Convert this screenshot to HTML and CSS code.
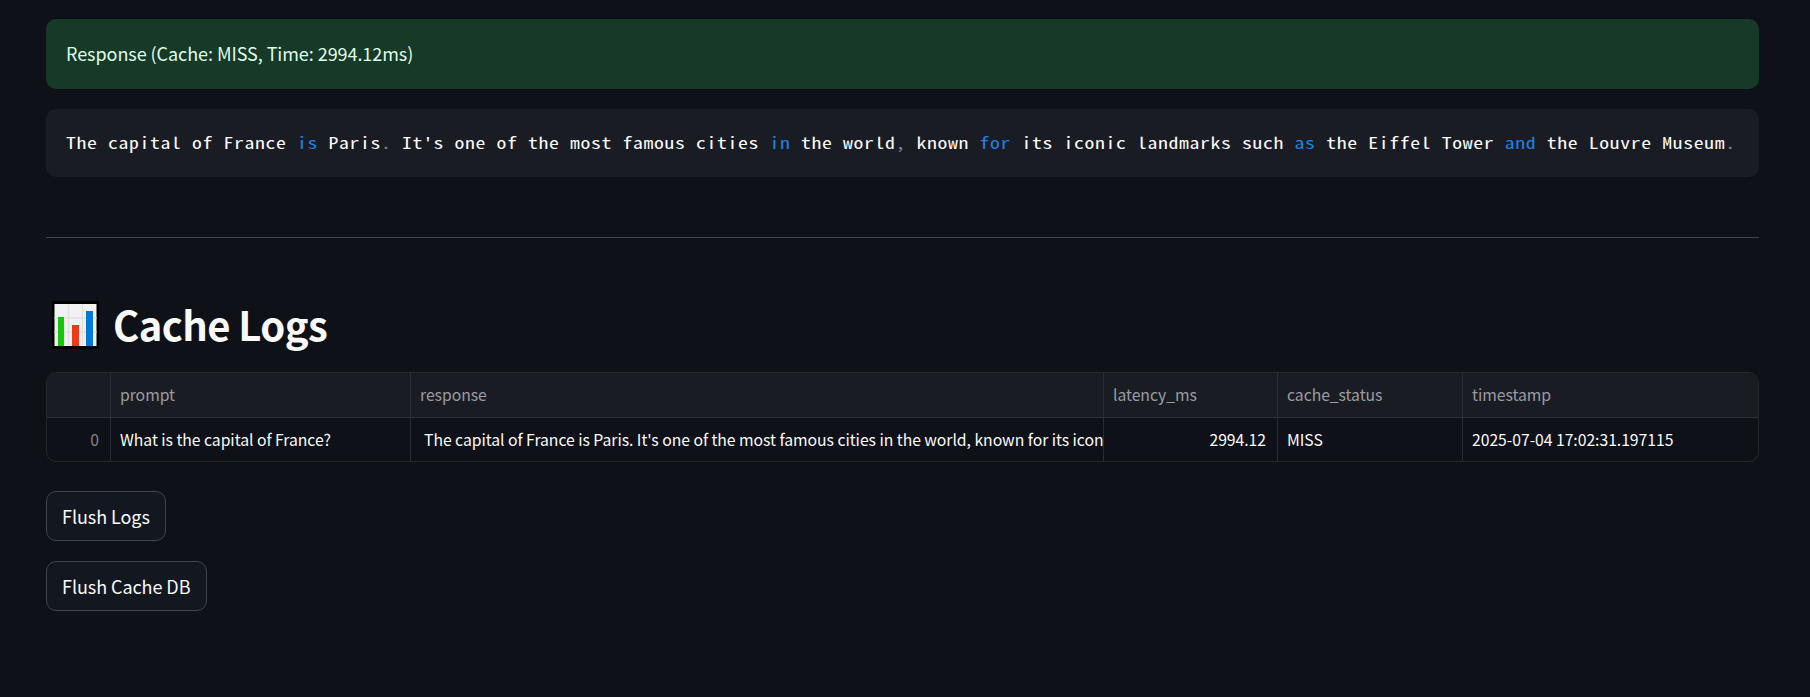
FILE: index.html
```html
<!DOCTYPE html>
<html lang="en">
<head>
<meta charset="utf-8">
<title>Cache Logs</title>
<link rel="stylesheet" href="styles.css">
</head>
<body>
<main class="page">
  <div class="alert"><span>Response (Cache: MISS, Time: 2994.12ms)</span></div>
  <pre class="code"><code>The capital of France <b class="kw">is</b> Paris<b class="punct">.</b> It's one of the most famous cities <b class="kw">in</b> the world<b class="punct">,</b> known <b class="kw">for</b> its iconic landmarks such <b class="kw">as</b> the Eiffel Tower <b class="kw">and</b> the Louvre Museum<b class="punct">.</b></code></pre>
  <hr class="divider">
  <h1 class="heading">
    <svg class="heading-icon" viewBox="0 0 47 48" width="47" height="48" aria-hidden="true">
      <rect width="47" height="48" fill="#000"/>
      <rect x="2.5" y="3" width="42" height="42" fill="#f2f2f2"/>
      <path d="M16.5 3v42M30.500 3v42M2.500 17h42M2.500 31h42" stroke="#e1e1e1" stroke-width="1.500"/>
      <rect x="6" y="16" width="6" height="29" fill="#16c60c"/>
      <rect x="20" y="24" width="7" height="21" fill="#f03a17"/>
      <rect x="34" y="10" width="7" height="35" fill="#0078d7"/>
    </svg>
    <span>Cache Logs</span>
  </h1>
  <div class="table">
    <div class="row head">
      <div class="cell"></div><div class="cell"><span>prompt</span></div><div class="cell"><span>response</span></div><div class="cell"><span>latency_ms</span></div><div class="cell"><span>cache_status</span></div><div class="cell"><span>timestamp</span></div>
    </div>
    <div class="row">
      <div class="cell index"><span>0</span></div><div class="cell"><span>What is the capital of France?</span></div><div class="cell response"><span>The capital of France is Paris. It's one of the most famous cities in the world, known for its icon</span></div><div class="cell number"><span>2994.12</span></div><div class="cell"><span>MISS</span></div><div class="cell"><span>2025-07-04 17:02:31.197115</span></div>
    </div>
  </div>
  <div class="actions">
    <button class="button logs">Flush Logs</button>
    <button class="button db">Flush Cache DB</button>
  </div>
</main>
</body>
</html>
```

FILE: styles.css
```css
* { box-sizing: border-box; }
body {
  margin: 0;
  background: #0e1117;
  color: #fafafa;
  font-family: "Noto Sans CJK SC", "Noto Sans", sans-serif;
  overflow: hidden;
}
.page {
  display: flex;
  flex-direction: column;
  width: 1810px;
  height: 697px;
  padding: 19px 51px 0 46px;
}
.alert {
  display: flex;
  align-items: center;
  height: 70px;
  padding: 0 20px 2px;
  border-radius: 10px;
  background: #173928;
  color: #dffde9;
  font-size: 18px;
  letter-spacing: -0.06px;
}
.code {
  display: flex;
  align-items: center;
  height: 68px;
  margin: 20px 0 0;
  padding: 0 20px 2px;
  border-radius: 10px;
  background: #1a1c24;
}
.code code {
  flex: none;
  font-family: "Noto Sans Mono CJK SC", "DejaVu Sans Mono", monospace;
  font-size: 15.75px;
  letter-spacing: 0.525px;
  white-space: pre;
  transform: scaleX(1.25);
  transform-origin: left center;
}
.code b { font-weight: 400; }
.kw { color: #1c83e1; }
.punct { color: #808495; }
.divider {
  flex: none;
  width: 100%;
  height: 1px;
  margin: 60px 0 0;
  border: 0;
  background: #41434a;
}
.heading {
  display: flex;
  align-items: center;
  gap: 14px;
  height: 48px;
  margin: 63px 0 0;
  padding-left: 6px;
  font-size: 40px;
  font-weight: 700;
  line-height: 46px;
  letter-spacing: -0.6px;
}
.heading span { padding-bottom: 2px; }
.heading-icon { flex: none; }
.table {
  height: 90px;
  margin-top: 23px;
  border: 1px solid #25272c;
  border-radius: 10px;
  overflow: hidden;
  font-size: 15.75px;
  letter-spacing: -0.04px;
}
.row {
  display: grid;
  grid-template-columns: 64px 300px 693px 174px 185px 1fr;
  height: 44px;
}
.head {
  height: 45px;
  background: #1a1c24;
  color: #9b9ca1;
  border-bottom: 1px solid #303239;
}
.cell {
  display: flex;
  align-items: center;
  min-width: 0;
  padding: 0 9px 2px;
  border-right: 1px solid #2b2d34;
  overflow: hidden;
  white-space: nowrap;
}
.cell:last-child { border-right: 0; }
.index, .number { justify-content: flex-end; padding-right: 11px; }
.index { color: #83858a; }
.response { padding-left: 13px; padding-right: 0; }
.actions {
  display: flex;
  flex-direction: column;
  align-items: flex-start;
  gap: 20px;
  margin-top: 29px;
}
.button {
  height: 50px;
  padding: 0 15px 1px;
  border: 1px solid #41444c;
  border-radius: 10px;
  background: #131720;
  color: #fafafa;
  font-family: inherit;
  font-size: 18px;
  letter-spacing: -0.06px;
  text-align: left;
  white-space: nowrap;
}
.logs { width: 120px; }
.db { width: 161px; }
```
